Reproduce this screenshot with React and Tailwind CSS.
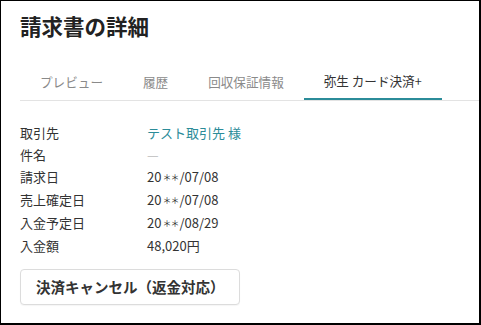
import React from 'react'

const tabs = ['プレビュー', '履歴', '回収保証情報', '弥生 カード決済+']

const rows = [
  { label: '取引先', value: 'テスト取引先 様', link: true },
  { label: '件名', value: '—', muted: true },
  { label: '請求日', value: '20＊＊/07/08' },
  { label: '売上確定日', value: '20＊＊/07/08' },
  { label: '入金予定日', value: '20＊＊/08/29' },
  { label: '入金額', value: '48,020円' },
]

export default function App() {
  return (
    <div
      className="w-[481px] h-[325px] bg-white border-l border-t border-r-2 border-b-2 border-black overflow-hidden text-[#333]"
      style={{ fontFamily: '"Noto Sans CJK JP", "Noto Sans", sans-serif' }}
    >
      <h1 className="pl-[19px] pt-[11px] text-[21.5px] leading-[28px] font-bold text-[#222]">請求書の詳細</h1>

      <div className="mt-[24px] ml-[19px] flex border-b border-[#e3e3e3]">
        {tabs.map((t, i) => (
          <div
            key={t}
            className={
              i === 3
                ? 'px-[20px] h-[36px] flex items-center text-[12.6px] text-[#333] border-b-2 border-[#2b8c99] -mb-px'
                : 'px-[20px] h-[36px] flex items-center text-[12.6px] text-[#8a8a8a]'
            }
          >
            {t}
          </div>
        ))}
      </div>

      <div className="mt-[21px] pl-[19px]">
        {rows.map(r => (
          <div key={r.label} className="flex text-[13px] leading-[22px]">
            <div className="w-[127px]">{r.label}</div>
            <div className={r.link ? 'text-[#2b8c99]' : r.muted ? 'text-[#bbb]' : ''}>
              {r.value.includes('＊＊') ? (
                <>
                  {r.value.split('＊＊')[0]}
                  <span className="text-[9px] tracking-[-1px] align-[1px] mx-[1px]">＊＊</span>
                  {r.value.split('＊＊')[1]}
                </>
              ) : r.value}
            </div>
          </div>
        ))}
      </div>

      <div className="mt-[12px] ml-[19px]">
        <button className="w-[220px] h-[36px] pl-[15px] text-left border border-[#dcdcdc] rounded-[4px] bg-white text-[14.5px] font-bold text-[#333] shadow-[0_1px_1px_rgba(0,0,0,0.04)]">
          決済キャンセル（返金対応）
        </button>
      </div>
    </div>
  )
}
